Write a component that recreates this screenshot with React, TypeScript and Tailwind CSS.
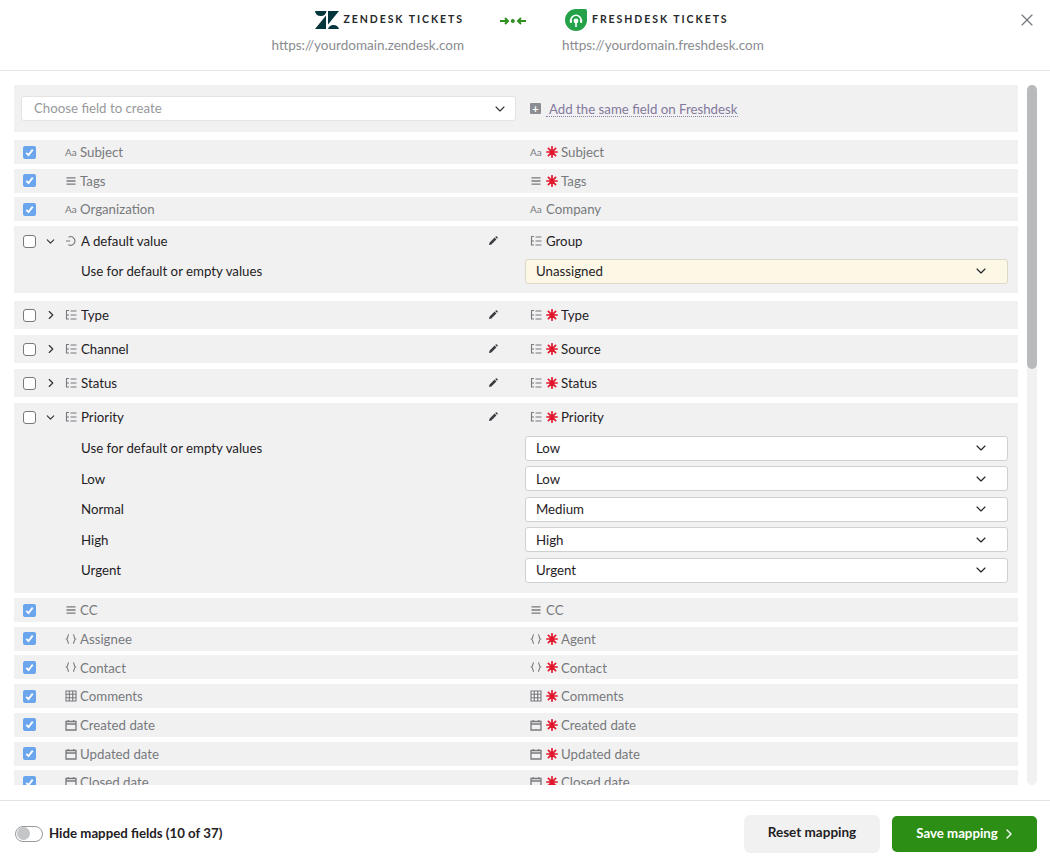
import { ChevronDown, ChevronRight, X } from "lucide-react";

type IconName = "text" | "list" | "tree" | "spin" | "braces" | "grid" | "date";

function FieldIcon({ name }: { name: IconName }) {
  if (name === "text") {
    return <span className="w-[12px] text-[10px] leading-none text-[#77797c]">Aa</span>;
  }
  return (
    <svg viewBox="0 0 12 12" className="h-[12px] w-[12px] shrink-0 text-[#77797c]" fill="none" stroke="currentColor" strokeWidth="1.1">
      {name === "list" && <path d="M1.5 2.8h9M1.5 6h9M1.5 9.2h9" strokeWidth="1.3" />}
      {name === "tree" && <path d="M1 1.5h3M1.5 1.5v8.5h2.5M1.5 6h2.5M5.5 2h6M5.5 6h6M5.5 10h6" />}
      {name === "spin" && <path d="M3.5 2.2A4.3 4.3 0 1 1 3.2 9.6M1 6h4.2" />}
      {name === "braces" && <path d="M4 1.5C2.4 1.5 3.2 5.5 1.6 6 3.2 6.5 2.4 10.5 4 10.5M8 1.5C9.6 1.5 8.8 5.5 10.4 6 8.8 6.5 9.6 10.5 8 10.5" />}
      {name === "grid" && <path d="M1 1h10v10H1zM4.3 1v10M7.7 1v10M1 4.3h10M1 7.7h10" />}
      {name === "date" && <path d="M1 2.5h10v8.5H1zM1 5h10M3.3 1v2.2M8.7 1v2.2" strokeWidth="1.3" />}
    </svg>
  );
}

function Star() {
  return (
    <svg viewBox="0 0 12 12" className="mr-[3px] h-[12px] w-[12px] shrink-0" stroke="#e0182d" strokeWidth="1.7" strokeLinecap="round">
      <path d="M6 .8v10.4M.8 6h10.4M2.4 2.4l7.2 7.2M9.6 2.4l-7.2 7.2" />
      <circle cx="6" cy="6" r="2.4" fill="#e0182d" stroke="none" />
    </svg>
  );
}

function Check({ on }: { on?: boolean }) {
  if (on) {
    return (
      <span className="flex h-[13px] w-[13px] shrink-0 items-center justify-center rounded-[2px] bg-[#6aa5ee]">
        <svg viewBox="0 0 12 12" className="h-[11px] w-[11px]" fill="none" stroke="#fff" strokeWidth="2">
          <path d="M2.5 6.5l2.4 2.4 4.6-6" />
        </svg>
      </span>
    );
  }
  return <span className="h-[13px] w-[13px] shrink-0 rounded-[3px] border border-[#77797c] bg-white" />;
}

function MappedRow({ icon, left, right, required, last }: { icon: IconName; left: string; right: string; required?: boolean; last?: boolean }) {
  return (
    <div className={"flex h-[24px] shrink-0 items-center bg-[#f1f1f2] text-[#77797c] " + (last ? "" : "mb-[4.7px]")}>
      <div className="flex w-[511px] items-center pl-[9px]">
        <Check on />
        <span className="ml-[29px] flex w-[15px] items-center"><FieldIcon name={icon} /></span>
        <span className="mt-[2px]">{left}</span>
      </div>
      <div className="flex items-center pl-[5px]">
        <span className="mr-[4px] flex w-[12px] items-center"><FieldIcon name={icon} /></span>
        {required && <Star />}
        <span className="mt-[2px]">{right}</span>
      </div>
    </div>
  );
}

function HeadRow({ icon, rightIcon, left, right, required, open }: { icon: IconName; rightIcon?: IconName; left: string; right: string; required?: boolean; open?: boolean }) {
  return (
    <div className="flex h-[28px] shrink-0 items-center text-[#1f2124]">
      <div className="flex w-[511px] items-center pl-[9px]">
        <Check />
        <span className="ml-[7px] flex w-[15px] justify-center">
          {open ? <ChevronDown size={13} strokeWidth={2} className="text-[#333]" /> : <ChevronRight size={14} strokeWidth={2} className="text-[#333]" />}
        </span>
        <span className="ml-[7px] flex w-[16px] items-center"><FieldIcon name={icon} /></span>
        <span className="mt-[2px]">{left}</span>
        <svg viewBox="0 0 10 10" className="ml-auto mr-[27px] h-[10px] w-[10px]" fill="#3a3c3f">
          <path d="M1 9l.6-2.4L6.6 1.6l1.8 1.8-5 5zM7.2 1l.6-.5a.8.8 0 0 1 1.1 0l.6.6a.8.8 0 0 1 0 1.1l-.5.6z" />
        </svg>
      </div>
      <div className="flex items-center pl-[5px]">
        <span className="mr-[4px] flex w-[12px] items-center"><FieldIcon name={rightIcon ?? icon} /></span>
        {required && <Star />}
        <span className="mt-[2px]">{right}</span>
      </div>
    </div>
  );
}

function Picker({ label, tint }: { label: string; tint?: boolean }) {
  return (
    <div className={"flex h-[25px] w-[483px] items-center justify-between rounded-[3px] border pl-[10px] pr-[18px] text-[#1f2124] " + (tint ? "border-[#dcd9c8] bg-[#fdf8e6]" : "border-[#cfd0d2] bg-white")}>
      <span className="mt-[2px]">{label}</span>
      <ChevronDown size={16} strokeWidth={1.7} />
    </div>
  );
}

function ValueRow({ label, value, tint }: { label: string; value: string; tint?: boolean }) {
  return (
    <div className="flex h-[30.5px] items-center text-[#1f2124]">
      <span className="mt-[2px] w-[511px] pl-[67px]">{label}</span>
      <Picker label={value} tint={tint} />
    </div>
  );
}

function ZendeskLogo() {
  return (
    <svg viewBox="0 0 24 18" className="mr-[4px] h-[18px] w-[24px]" fill="#03363d">
      <path d="M0 0h11.5A5.8 5.8 0 0 1 0 0zM0 18L11 4.5V18zM13 18a5.8 5.8 0 0 1 11 0zM13 13.5V0h11z" />
    </svg>
  );
}

function FreshdeskLogo() {
  return (
    <svg viewBox="0 0 22 22" className="mr-[5px] h-[22px] w-[22px]">
      <path d="M11 0h9a2 2 0 0 1 2 2v9a11 11 0 1 1-11-11z" fill="#25a249" />
      <path d="M5.8 11.5a5.2 5.2 0 0 1 10.4 0" fill="none" stroke="#fff" strokeWidth="1.6" />
      <circle cx="11" cy="12" r="2.4" fill="#fff" />
      <path d="M11 14v4" stroke="#fff" strokeWidth="1.6" />
      <rect x="4.8" y="10.5" width="2.2" height="3.6" rx="1" fill="#fff" />
      <rect x="15" y="10.5" width="2.2" height="3.6" rx="1" fill="#fff" />
    </svg>
  );
}

export default function App() {
  return (
    <div className="flex h-[860px] w-[1050px] flex-col overflow-hidden bg-white font-['Lato',sans-serif] text-[13.25px]">
      <header className="relative flex h-[71px] shrink-0 border-b border-[#e4e4e5] text-[13.5px]">
        <div className="ml-[272px] flex w-[192px] flex-col items-end pt-[9px]">
          <div className="flex h-[22px] items-center">
            <ZendeskLogo />
            <span className="text-[10.5px] font-bold tracking-[1.95px] text-[#26282b]">ZENDESK TICKETS</span>
          </div>
          <span className="mt-[4px] text-[#8a8c8f]">https://yourdomain.zendesk.com</span>
        </div>
        <div className="ml-[35px] flex h-[42px] w-[28px] items-center justify-center">
          <svg viewBox="0 0 28 10" className="h-[10px] w-[28px]" fill="none" stroke="#2f8f1f" strokeWidth="2">
            <path d="M1 5h8M6 2l3 3-3 3M27 5h-8M22 2l-3 3 3 3" />
            <circle cx="13.8" cy="5" r="2" fill="#2f8f1f" stroke="none" />
          </svg>
        </div>
        <div className="ml-[35px] flex w-[202px] flex-col items-start pt-[9px]">
          <div className="flex h-[22px] items-center pl-[3px]">
            <FreshdeskLogo />
            <span className="text-[10.5px] font-bold tracking-[1.95px] text-[#26282b]">FRESHDESK TICKETS</span>
          </div>
          <span className="mt-[4px] text-[#8a8c8f]">https://yourdomain.freshdesk.com</span>
        </div>
        <X size={20} strokeWidth={1.4} className="absolute right-[13px] top-[10px] text-[#77797c]" />
      </header>

      <main className="flex min-h-0 flex-1 pl-[14px] pt-[14px]">
        <div className="mb-[15px] w-[1004px] overflow-hidden">
          <div className="mb-[8px] flex h-[47px] items-center bg-[#f1f1f2]">
            <div className="w-[511px] pl-[7px]">
              <div className="flex h-[25px] w-[495px] items-center justify-between rounded-[3px] border border-[#e4e4e5] bg-white pl-[12px] pr-[7px] text-[#97999c]">
                <span>Choose field to create</span>
                <ChevronDown size={16} strokeWidth={1.7} className="text-[#333]" />
              </div>
            </div>
            <span className="ml-[5px] flex h-[11px] w-[11px] items-center justify-center rounded-[1px] bg-[#8b8d92] text-[11px] font-bold leading-none text-white">+</span>
            <span className="ml-[5px] mt-[2px] border-b border-dotted border-[#8b7fa8] pl-[3px] leading-[14px] text-[#84799c]">Add the same field on Freshdesk</span>
          </div>

          <MappedRow icon="text" left="Subject" right="Subject" required />
          <MappedRow icon="list" left="Tags" right="Tags" required />
          <MappedRow icon="text" left="Organization" right="Company" />

          <div className="mb-[8px] h-[67px] bg-[#f1f1f2] pt-[1px]">
            <HeadRow icon="spin" rightIcon="tree" left="A default value" right="Group" open />
            <div className="pt-[1px]">
              <ValueRow label="Use for default or empty values" value="Unassigned" tint />
            </div>
          </div>

          <div className="mb-[6px] bg-[#f1f1f2]"><HeadRow icon="tree" left="Type" right="Type" required /></div>
          <div className="mb-[6px] bg-[#f1f1f2]"><HeadRow icon="tree" left="Channel" right="Source" required /></div>
          <div className="mb-[6px] bg-[#f1f1f2]"><HeadRow icon="tree" left="Status" right="Status" required /></div>

          <div className="mb-[5px] h-[190px] bg-[#f1f1f2]">
            <HeadRow icon="tree" left="Priority" right="Priority" required open />
            <div className="pt-[2px]">
              <ValueRow label="Use for default or empty values" value="Low" />
              <ValueRow label="Low" value="Low" />
              <ValueRow label="Normal" value="Medium" />
              <ValueRow label="High" value="High" />
              <ValueRow label="Urgent" value="Urgent" />
            </div>
          </div>

          <MappedRow icon="list" left="CC" right="CC" />
          <MappedRow icon="braces" left="Assignee" right="Agent" required />
          <MappedRow icon="braces" left="Contact" right="Contact" required />
          <MappedRow icon="grid" left="Comments" right="Comments" required />
          <MappedRow icon="date" left="Created date" right="Created date" required />
          <MappedRow icon="date" left="Updated date" right="Updated date" required />
          <MappedRow icon="date" left="Closed date" right="Closed date" required last />
        </div>
        <div className="mb-[15px] ml-[9px] w-[10px] rounded-full bg-[#f1f1f2]">
          <div className="h-[284px] rounded-full bg-[#b9babb]" />
        </div>
      </main>

      <footer className="flex h-[60px] shrink-0 items-center border-t border-[#e4e4e5] pl-[15px] pr-[13px] pt-[6px]">
        <span className="flex h-[16px] w-[28px] items-center rounded-full border border-[#97999c] pl-[1px]">
          <span className="h-[13px] w-[13px] rounded-full bg-[#c4c5c7]" />
        </span>
        <span className="ml-[6px] font-bold text-[#1f2124]">Hide mapped fields (10 of 37)</span>
        <button className="ml-auto h-[38px] w-[136px] rounded-[6px] bg-[#f1f1f2] pb-[3px] text-[13.5px] font-bold text-[#1f2124]">Reset mapping</button>
        <button className="ml-[12px] flex h-[36px] w-[145px] items-center justify-center rounded-[5px] bg-[#2c8e14] pl-[4px] font-bold text-white">
          Save mapping
          <ChevronRight size={16} strokeWidth={2} className="ml-[3px]" />
        </button>
      </footer>
    </div>
  );
}
